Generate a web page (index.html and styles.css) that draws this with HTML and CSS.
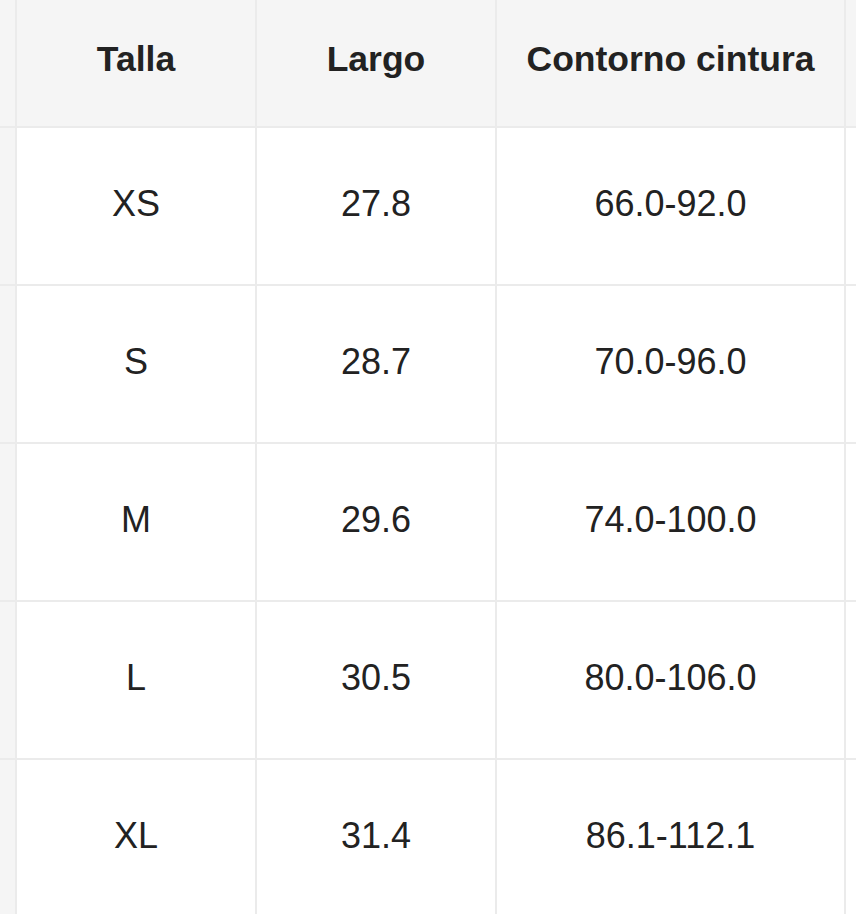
FILE: index.html
```html
<!DOCTYPE html>
<html lang="es">
<head>
<meta charset="utf-8">
<title>Tabla de tallas</title>
<link rel="stylesheet" href="styles.css">
</head>
<body>
<div class="size-table">
  <div class="cell edge head"></div>
  <div class="cell head">Talla</div>
  <div class="cell head">Largo</div>
  <div class="cell head">Contorno cintura</div>
  <div class="cell edge-r head"></div>

  <div class="cell edge"></div>
  <div class="cell">XS</div>
  <div class="cell">27.8</div>
  <div class="cell">66.0-92.0</div>
  <div class="cell edge-r"></div>

  <div class="cell edge"></div>
  <div class="cell">S</div>
  <div class="cell">28.7</div>
  <div class="cell">70.0-96.0</div>
  <div class="cell edge-r"></div>

  <div class="cell edge"></div>
  <div class="cell">M</div>
  <div class="cell">29.6</div>
  <div class="cell">74.0-100.0</div>
  <div class="cell edge-r"></div>

  <div class="cell edge"></div>
  <div class="cell">L</div>
  <div class="cell">30.5</div>
  <div class="cell">80.0-106.0</div>
  <div class="cell edge-r"></div>

  <div class="cell edge"></div>
  <div class="cell">XL</div>
  <div class="cell">31.4</div>
  <div class="cell">86.1-112.1</div>
  <div class="cell edge-r"></div>
</div>
</body>
</html>
```

FILE: styles.css
```css
html, body {
  margin: 0;
  padding: 0;
  background: #ffffff;
  overflow: hidden;
}

.size-table {
  display: grid;
  grid-template-columns: 15px 238px 238px 347px 10px;
  grid-template-rows: 126px repeat(5, 156px);
  gap: 2px;
  background: #ebebeb;
  width: 856px;
  font-family: "Liberation Sans", Arial, Helvetica, sans-serif;
}

.cell {
  background: #ffffff;
  display: flex;
  align-items: center;
  justify-content: center;
  font-size: 36px;
  color: #222222;
  padding-bottom: 4px;
  box-sizing: border-box;
  white-space: nowrap;
}

.cell.head {
  background: #f5f5f5;
  font-weight: bold;
  font-size: 35.5px;
  color: #222222;
  padding-bottom: 8px;
}

.cell.edge {
  background: #f5f5f5;
}
```
